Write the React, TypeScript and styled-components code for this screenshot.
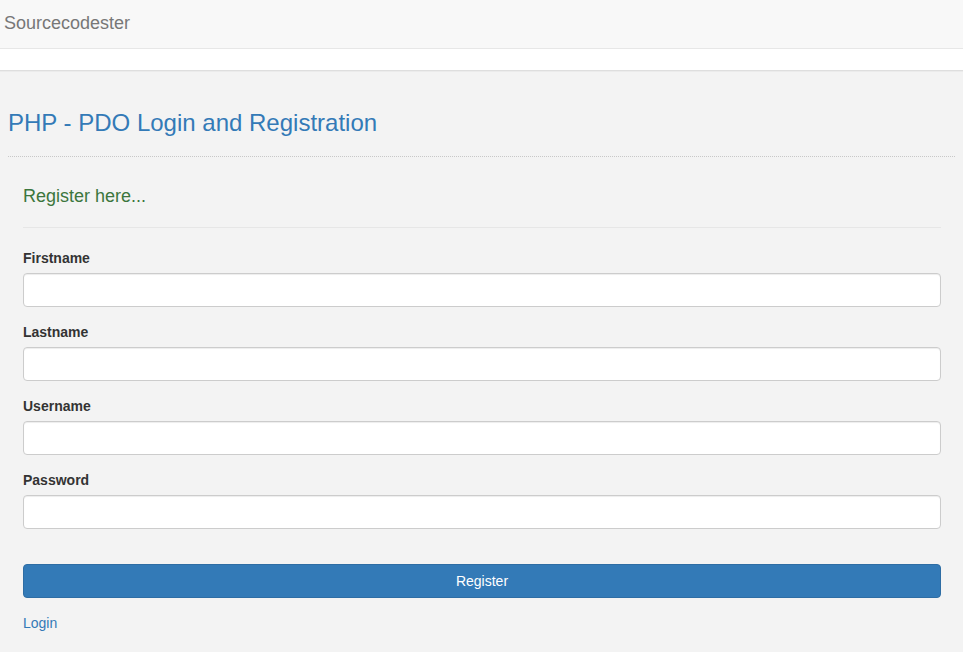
import React from "react";
import styled, { createGlobalStyle } from "styled-components";

const Global = createGlobalStyle`
  html, body { margin: 0; padding: 0; }
  body {
    background: #f3f3f3;
    font-family: "Liberation Sans", Arial, Helvetica, sans-serif;
    font-size: 14px;
    line-height: 20px;
    color: #333;
  }
  * { box-sizing: border-box; }
`;

const Navbar = styled.nav`
  height: 49px;
  background: #f8f8f8;
  border-bottom: 1px solid #e7e7e7;
  padding: 13px 4px 0;
`;

const Brand = styled.a`
  display: block;
  font-size: 18px;
  line-height: 20px;
  color: #777;
  text-decoration: none;
`;

const Strip = styled.div`
  height: 22px;
  background: #fff;
  border-bottom: 1px solid #dedede;
  box-shadow: 0 1px 0 #ebebeb;
`;

const Main = styled.main`
  padding: 0 8px;
`;

const Title = styled.h3`
  margin: 39px 0 20px;
  font-size: 24px;
  line-height: 26px;
  font-weight: 500;
  color: #337ab7;
`;

const DottedRule = styled.hr`
  margin: 0;
  border: 0;
  border-top: 1px dotted #c8c8c8;
`;

const Panel = styled.div`
  padding: 29px 14px 20px 15px;
`;

const Subtitle = styled.h4`
  margin: 0 0 21px;
  font-size: 18px;
  line-height: 20px;
  font-weight: 500;
  color: #3c763d;
`;

const Rule = styled.hr`
  margin: 0 0 20px;
  border: 0;
  border-top: 1px solid #e6e6e6;
`;

const Form = styled.form`
  display: flex;
  flex-direction: column;
`;

const Group = styled.div`
  display: flex;
  flex-direction: column;
  margin-bottom: 15px;
`;

const Label = styled.label`
  font-weight: 700;
  font-size: 14px;
  line-height: 20px;
  margin-bottom: 5px;
  color: #333;
`;

const Input = styled.input`
  height: 34px;
  width: 100%;
  padding: 6px 12px;
  font-size: 14px;
  font-family: inherit;
  color: #555;
  background: #fff;
  border: 1px solid #ccc;
  border-radius: 4px;
  box-shadow: inset 0 1px 1px rgba(0, 0, 0, 0.075);
  outline: none;
`;

const Button = styled.button`
  margin-top: 20px;
  height: 34px;
  width: 100%;
  font-family: inherit;
  font-size: 14px;
  color: #fff;
  background: #337ab7;
  border: 1px solid #2e6da4;
  border-radius: 4px;
  cursor: pointer;
`;

const LinkRow = styled.div`
  margin-top: 15px;
  line-height: 20px;
`;

const TextLink = styled.a`
  color: #337ab7;
  text-decoration: none;
  font-size: 14px;
`;

const fields = ["Firstname", "Lastname", "Username", "Password"];

export default function App() {
  return (
    <>
      <Global />
      <Navbar>
        <Brand href="#">Sourcecodester</Brand>
      </Navbar>
      <Strip />
      <Main>
        <Title>PHP - PDO Login and Registration</Title>
        <DottedRule />
        <Panel>
          <Subtitle>Register here...</Subtitle>
          <Rule />
          <Form onSubmit={(e) => e.preventDefault()}>
            {fields.map((f) => (
              <Group key={f}>
                <Label>{f}</Label>
                <Input type={f === "Password" ? "password" : "text"} />
              </Group>
            ))}
            <Button type="submit">Register</Button>
          </Form>
          <LinkRow>
            <TextLink href="#">Login</TextLink>
          </LinkRow>
        </Panel>
      </Main>
    </>
  );
}
